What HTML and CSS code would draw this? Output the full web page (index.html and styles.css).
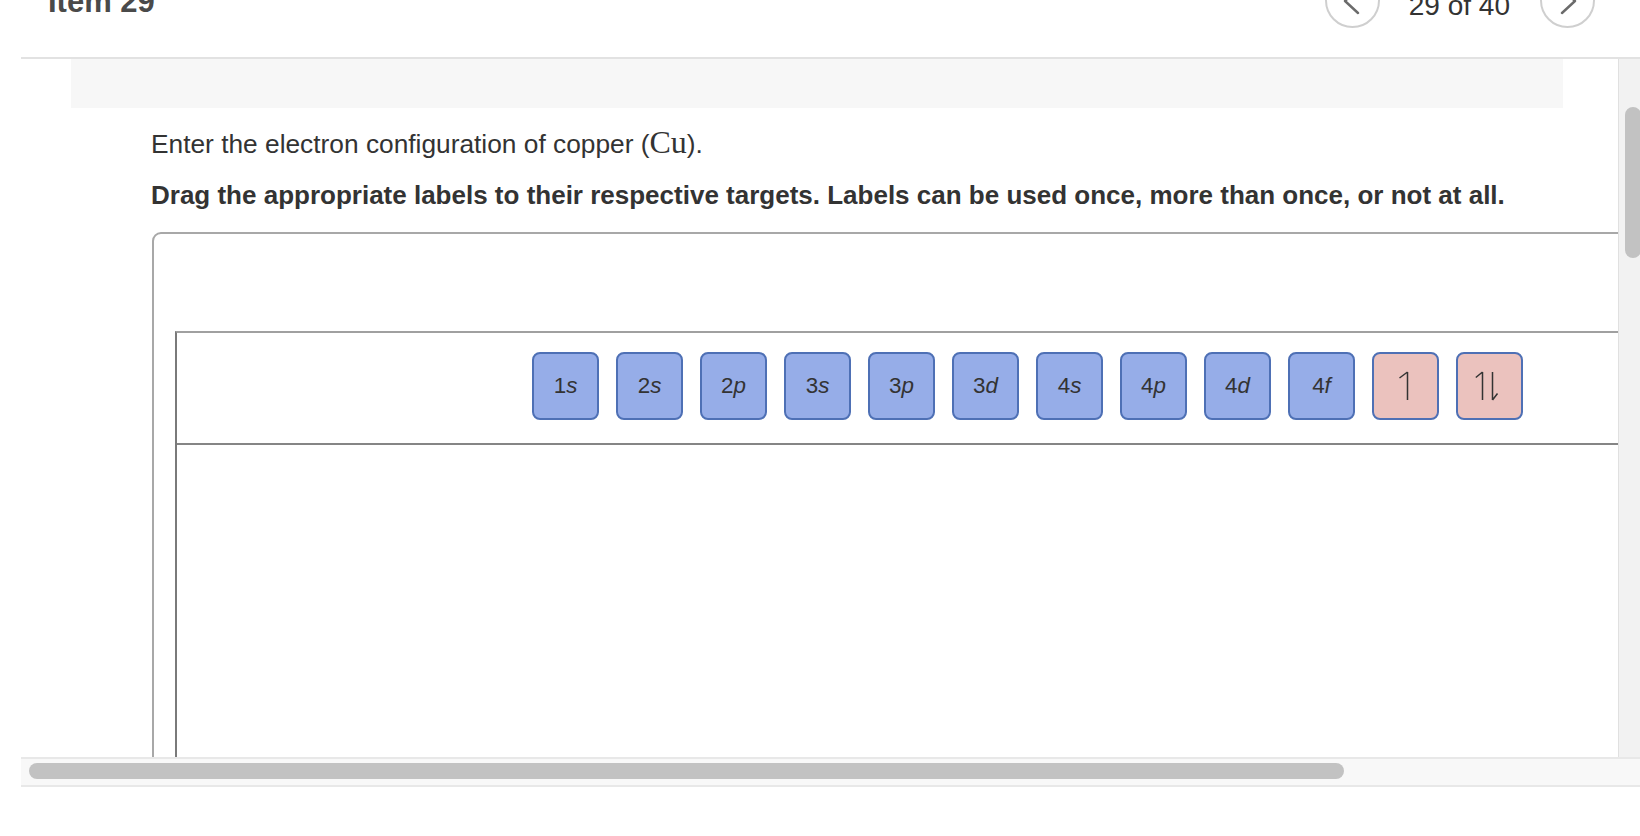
FILE: index.html
```html
<!DOCTYPE html>
<html lang="en">
<head>
<meta charset="utf-8">
<title>Item 29</title>
<link rel="stylesheet" href="styles.css">
</head>
<body>
<header class="header">
  <h1 class="title">Item 29</h1>
  <nav class="pager">
    <div class="circle" role="button" aria-label="Previous">
      <svg width="51" height="51" viewBox="0 0 51 51"><polyline points="31,14 18,26 31,38" fill="none" stroke="#6b6b6b" stroke-width="2.4" stroke-linecap="round" stroke-linejoin="round"/></svg>
    </div>
    <span class="count">29 of 40</span>
    <div class="circle" role="button" aria-label="Next">
      <svg width="51" height="51" viewBox="0 0 51 51"><polyline points="20,14 33,26 20,38" fill="none" stroke="#6b6b6b" stroke-width="2.4" stroke-linecap="round" stroke-linejoin="round"/></svg>
    </div>
  </nav>
</header>
<div class="panel">
  <div class="viewport">
    <div class="canvas">
      <div class="band"></div>
      <div class="prompt">
        <p class="q">Enter the electron configuration of copper (<span class="math">Cu</span>).</p>
        <p class="instr">Drag the appropriate labels to their respective targets. Labels can be used once, more than once, or not at all.</p>
      </div>
      <div class="box">
        <div class="inner">
          <div class="tiles">
            <div class="tile">1<i>s</i></div>
            <div class="tile">2<i>s</i></div>
            <div class="tile">2<i>p</i></div>
            <div class="tile">3<i>s</i></div>
            <div class="tile">3<i>p</i></div>
            <div class="tile">3<i>d</i></div>
            <div class="tile">4<i>s</i></div>
            <div class="tile">4<i>p</i></div>
            <div class="tile">4<i>d</i></div>
            <div class="tile">4<i>f</i></div>
            <div class="tile pink" aria-label="up">
              <svg width="20" height="32" viewBox="0 0 20 32"><path d="M11.5 2 V30 M11.5 2 L3.5 8" fill="none" stroke="#333" stroke-width="1.5"/></svg>
            </div>
            <div class="tile pink" aria-label="up down">
              <svg width="30" height="32" viewBox="0 0 30 32"><path d="M7.5 2 V30 M7.5 2 L0.8 7.5 M17.5 2 V30 M17.5 30 L22.5 23.5" fill="none" stroke="#333" stroke-width="1.5"/></svg>
            </div>
          </div>
        </div>
      </div>
    </div>
  </div>
  <div class="vscroll"><div class="vthumb"></div></div>
  <div class="hscroll"><div class="hthumb"></div></div>
</div>
</body>
</html>
```
FILE: styles.css
```css
* { box-sizing: border-box; }
html, body { margin: 0; height: 100%; overflow: hidden; background: #fff; }
body { width: 1640px; font-family: "Liberation Sans", Arial, sans-serif; color: #333; }

.header { display: flex; align-items: flex-start; height: 57px; }
.title { margin: -14px 0 0 48px; font-size: 31px; line-height: 31px; font-weight: 700; color: #4a4a4a; }
.pager { margin-left: auto; margin-right: 45px; display: flex; align-items: flex-start; }
.circle { width: 55px; height: 55px; margin-top: -27px; border: 2px solid #cfcfcf; border-radius: 50%; background: #fff; }
.circle svg { display: block; }
.count { margin: -8px 30px 0 29px; font-size: 28px; line-height: 28px; color: #333; white-space: nowrap; }

.panel { margin-left: 21px; border-top: 2px solid #e2e2e2; display: grid; grid-template-columns: 1597px 22px; grid-template-rows: 698px 30px; }
.viewport { grid-row: 1; grid-column: 1; overflow: hidden; background: #fff; }
.canvas { width: 1950px; }
.band { margin-left: 50px; width: 1492px; height: 49px; background: #f7f7f7; }
.prompt { padding: 21px 0 0 130px; }
.q { margin: 0; height: 30px; font-size: 26.3px; line-height: 30px; white-space: nowrap; }
.math { font-family: "Liberation Serif", "Times New Roman", serif; font-size: 32px; line-height: 16px; }
.instr { margin: 21px 0 0; font-size: 26px; line-height: 30px; font-weight: 700; white-space: nowrap; }

.box { margin: 22px 0 0 131px; width: 1800px; height: 620px; border: 2px solid #a8a8a8; border-radius: 9px; }
.inner { margin: 97px 0 0 21px; height: 600px; border-top: 2px solid #a0a0a0; border-left: 2px solid #7a7a7a; }
.tiles { display: flex; gap: 17px; padding: 19px 0 23px 355px; border-bottom: 2px solid #858585; }
.tile { width: 67px; height: 68px; flex: none; display: flex; align-items: center; justify-content: center; border: 2px solid #4e70b5; border-radius: 8px; background: #96ade8; font-size: 22.4px; color: #333; }
.tile.pink { background: #ebc2be; }
.tile svg { display: block; }

.vscroll { grid-row: 1; grid-column: 2; overflow: hidden; border-left: 1px solid #e0e0e0; background: #f2f2f2; padding: 48px 0 0 6px; }
.vthumb { width: 16px; height: 151px; border-radius: 8px; background: #c2c2c2; }
.hscroll { grid-row: 2; grid-column: 1 / -1; border-top: 2px solid #e8e8e8; border-bottom: 2px solid #e8e8e8; background: #f8f8f8; padding: 4px 0 0 8px; }
.hthumb { width: 1315px; height: 16px; border-radius: 8px; background: #c2c2c2; }
```
